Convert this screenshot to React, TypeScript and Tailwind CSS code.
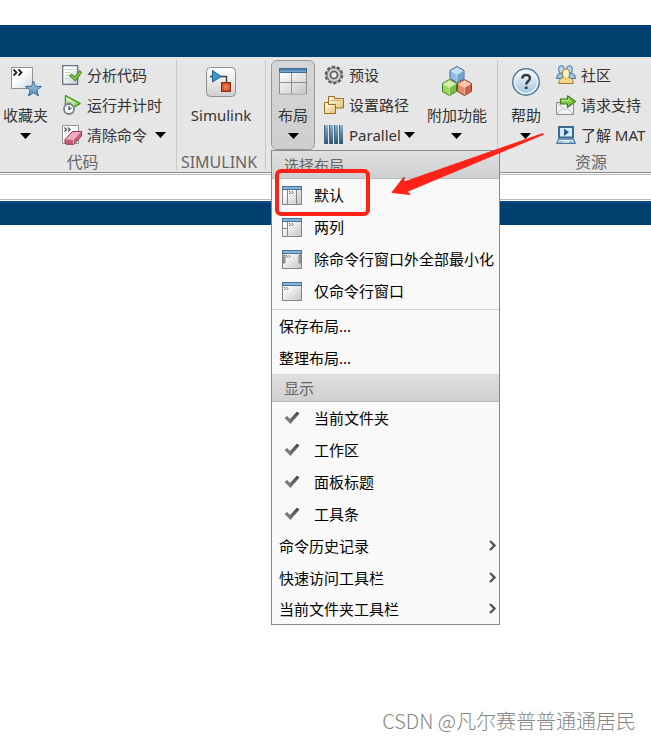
import type { ReactNode } from 'react';

function AnalyzeIcon() {
  return (
    <svg width="20" height="20" viewBox="0 0 20 20" aria-hidden="true">
      <defs>
        <linearGradient id="an-page" x1="0" y1="0" x2="1" y2="1">
          <stop offset="0.3" stopColor="#fff" />
          <stop offset="1" stopColor="#bcc8d2" />
        </linearGradient>
      </defs>
      <path d="M0.7 0.7h15v18.600h-15z" fill="url(#an-page)" stroke="#657582" strokeWidth="1.300" />
      <path d="M3 4.500h8M3 7.500h5M3 10.500h4M3 13.500h5" stroke="#c3d2cf" />
      <path
        d="M7.500 11l2-2 3.500 3L17.500 5.500l2.200 1.700L13.500 16z"
        fill="#7fc243"
        stroke="#3e7d1d"
        strokeLinejoin="round"
      />
    </svg>
  );
}

function RunTimeIcon() {
  return (
    <svg width="20" height="20" viewBox="0 0 20 20" aria-hidden="true">
      <defs>
        <linearGradient id="run-tri" x1="0" y1="0" x2="1" y2="1">
          <stop offset="0" stopColor="#f2ffe6" />
          <stop offset="1" stopColor="#86cf58" />
        </linearGradient>
      </defs>
      <path d="M3.500 0.700L18 8.500L9 13.500H3.500z" fill="url(#run-tri)" stroke="#459c25" strokeWidth="1.500" strokeLinejoin="round" />
      <path d="M5 7.500h4V10H5z" fill="#79858e" />
      <circle cx="7" cy="14" r="5" fill="#f6f8fa" stroke="#77838c" strokeWidth="1.800" />
      <path d="M7 11v3.500l2.500-1.500" fill="none" stroke="#3f4b55" strokeWidth="1.200" />
    </svg>
  );
}

function ClearIcon() {
  return (
    <svg width="20" height="20" viewBox="0 0 20 20" aria-hidden="true">
      <path d="M0.500 0.500h16v18h-16z" fill="#fbfcfd" stroke="#8c969f" />
      <path d="M2.500 2.500l2 2-2 2M6 2.500l2 2-2 2" fill="none" stroke="#444" strokeWidth="1.200" />
      <path d="M3 14.500l7.500-8h9v4.500L12 19.300H4.500L3 18z" fill="#c4607b" stroke="#97384f" strokeLinejoin="round" />
      <path d="M3.500 14.500l7.300-7.500h8.200l-7.500 8z" fill="#f0aebc" />
      <path d="M11.500 15v4" stroke="#e9a1b2" />
    </svg>
  );
}

function FavoritesIcon() {
  return (
    <svg width="32" height="32" viewBox="0 0 32 32" aria-hidden="true">
      <defs>
        <linearGradient id="fav-page" x1="0" y1="0" x2="1" y2="1">
          <stop offset="0.4" stopColor="#fff" />
          <stop offset="1" stopColor="#d0d6da" />
        </linearGradient>
        <linearGradient id="fav-star" x1="0" y1="0" x2="0" y2="1">
          <stop offset="0" stopColor="#a9cfe9" />
          <stop offset="1" stopColor="#5188b4" />
        </linearGradient>
      </defs>
      <path d="M1.500 2.500h21v21h-21z" fill="url(#fav-page)" stroke="#88929a" />
      <path d="M3.500 4.500l3 3-3 3M8.500 4.500l3 3-3 3" fill="none" stroke="#222" strokeWidth="1.800" />
      <path
        d="M23.500 16l2 5.300 6 .2-4.600 3.700 1.600 5.800-5-3.300-5 3.300 1.600-5.800-4.600-3.700 6-.2z"
        fill="url(#fav-star)"
        stroke="#3b6f9c"
        strokeLinejoin="round"
      />
    </svg>
  );
}

function SimulinkIcon() {
  return (
    <svg width="32" height="32" viewBox="0 0 32 32" aria-hidden="true">
      <defs>
        <linearGradient id="sim-tile" x1="0" y1="0" x2="0" y2="1">
          <stop offset="0" stopColor="#fff" />
          <stop offset="1" stopColor="#d0d0d0" />
        </linearGradient>
        <radialGradient id="sim-box">
          <stop offset="0" stopColor="#f08a5a" />
          <stop offset="1" stopColor="#cf4a20" />
        </radialGradient>
      </defs>
      <rect x="1.500" y="2.500" width="29" height="29" rx="4" fill="url(#sim-tile)" stroke="#909090" />
      <path d="M5 11.500h4M14 11.500h7.500v6" fill="none" stroke="#3c3c3c" strokeWidth="1.400" />
      <path d="M7.500 5.500L16 11.500l-8.500 5.500z" fill="#3d9bd0" stroke="#1b5f91" strokeLinejoin="round" />
      <rect x="16.500" y="17.500" width="9" height="9" fill="url(#sim-box)" stroke="#7f2c14" />
    </svg>
  );
}

function LayoutIcon() {
  return (
    <svg width="30" height="32" viewBox="0 0 30 32" aria-hidden="true">
      <defs>
        <linearGradient id="lay-bar" x1="0" y1="0" x2="0" y2="1">
          <stop offset="0" stopColor="#356a9b" />
          <stop offset="1" stopColor="#8dbbe0" />
        </linearGradient>
        <linearGradient id="lay-pane" x1="0" y1="0" x2="1" y2="1">
          <stop offset="0" stopColor="#fff" />
          <stop offset="1" stopColor="#c8c8c8" />
        </linearGradient>
      </defs>
      <path d="M1 4h28v25H1z" fill="#fff" />
      <path d="M2 8h11v9H2zM14 8h14v9H14zM2 18h11v10H2zM14 18h14v10H14z" fill="url(#lay-pane)" />
      <path d="M1.500 7v22h27V7M1.500 17.500h27M13.500 8v21" fill="none" stroke="#8f8f8f" />
      <path d="M1 3h28v5H1z" fill="url(#lay-bar)" />
      <path d="M1.500 3.500h27v4h-27z" fill="none" stroke="#416d94" />
    </svg>
  );
}

function GearIcon() {
  return (
    <svg width="20" height="20" viewBox="0 0 20 20" aria-hidden="true">
      <circle cx="10" cy="10" r="8.200" fill="none" stroke="#5e5e5e" strokeWidth="2.200" strokeDasharray="3.440 1.712" />
      <circle cx="10" cy="10" r="7.200" fill="#bdbdbd" stroke="#666" />
      <circle cx="10" cy="10" r="5.400" fill="none" stroke="#dcdcdc" />
      <circle cx="10" cy="10" r="3.500" fill="#e9e9e9" stroke="#5a5a5a" strokeWidth="1.700" />
    </svg>
  );
}

function PathIcon() {
  return (
    <svg width="20" height="20" viewBox="0 0 20 20" aria-hidden="true">
      <defs>
        <linearGradient id="path-folder" x1="0" y1="0" x2="1" y2="1">
          <stop offset="0" stopColor="#fffdf0" />
          <stop offset="1" stopColor="#e3c171" />
        </linearGradient>
      </defs>
      <path d="M4.500 1.500h6v2h9v9.500h-15z" fill="url(#path-folder)" stroke="#9c6c1c" />
      <path d="M6.500 5.500h11" stroke="#d2ad60" />
      <path d="M0.500 7.500h4v2h7v9h-11z" fill="url(#path-folder)" stroke="#9c6c1c" />
      <path d="M2 11h8" stroke="#fffbe6" />
    </svg>
  );
}

function ParallelIcon() {
  return (
    <svg width="20" height="20" viewBox="0 0 20 20" aria-hidden="true">
      <defs>
        <linearGradient id="par-bar" x1="0" y1="0" x2="0" y2="1">
          <stop offset="0" stopColor="#8db3cd" />
          <stop offset="1" stopColor="#2f5877" />
        </linearGradient>
      </defs>
      {[0, 5, 10, 15].map((x) => (
        <g key={x}>
          <rect x={x} y="0" width="4" height="19" fill="url(#par-bar)" />
          <rect x={x} y="0" width="1" height="19" fill="#426b8a" />
        </g>
      ))}
    </svg>
  );
}

function AddOnsIcon() {
  const cubes = [
    { x: 8.5, y: 0, top: '#c3e0f4', left: '#8fbfe2', right: '#6fa5ce', line: '#35658f' },
    { x: 1, y: 13, top: '#d3f0a8', left: '#a0d763', right: '#7dbb40', line: '#47791f' },
    { x: 16, y: 13, top: '#f8c6b0', left: '#e68b6b', right: '#cd6145', line: '#8f3a25' },
  ];
  return (
    <svg width="32" height="32" viewBox="0 0 32 32" aria-hidden="true">
      {cubes.map((c) => (
        <g key={c.line} transform={`translate(${c.x} ${c.y + 1})`} strokeLinejoin="round">
          <path d="M7.500 0.500L14.500 4.500V12.500L7.500 16.500L0.500 12.500V4.500z" fill={c.left} stroke={c.line} />
          <path d="M7.500 8.500L14 5v7.200L7.500 16z" fill={c.right} />
          <path d="M7.500 1.200L13.600 4.700L7.500 8.200L1.400 4.700z" fill={c.top} />
          <path d="M1 4.800l6.500 3.700L14 4.800M7.500 8.500V16" fill="none" stroke="#fff" strokeOpacity="0.400" />
        </g>
      ))}
    </svg>
  );
}

function HelpIcon() {
  return (
    <svg width="32" height="32" viewBox="0 0 32 32" aria-hidden="true">
      <defs>
        <linearGradient id="help-disc" x1="0" y1="0" x2="0" y2="1">
          <stop offset="0" stopColor="#fff" />
          <stop offset="1" stopColor="#9dc1db" />
        </linearGradient>
      </defs>
      <circle cx="16" cy="17" r="13.200" fill="url(#help-disc)" stroke="#547a98" strokeWidth="1.500" />
      <circle cx="16" cy="17" r="11.500" fill="none" stroke="#e8f3fa" strokeWidth="1.500" />
      <path
        d="M12.300 13.600c.1-2.400 1.600-3.600 3.800-3.600s3.800 1.300 3.800 3.300c0 3-3.700 2.900-3.700 6.200"
        fill="none"
        stroke="#333d47"
        strokeWidth="2.500"
      />
      <path d="M14.900 21.400h2.700v2.700h-2.700z" fill="#333d47" />
    </svg>
  );
}

function CommunityIcon() {
  return (
    <svg width="20" height="20" viewBox="0 0 20 20" aria-hidden="true">
      <path d="M0.600 13.500c0-3.500 1.500-5 4-5s4 1.500 4 5z" fill="#9cc5e4" stroke="#44759e" />
      <ellipse cx="5.500" cy="4.500" rx="2.900" ry="3.900" fill="#b7d8ef" stroke="#44759e" />
      <path d="M11.400 13.500c0-3.500 1.500-5 4-5s4 1.500 4 5z" fill="#9cc5e4" stroke="#44759e" />
      <ellipse cx="13.500" cy="4.500" rx="2.900" ry="3.900" fill="#b7d8ef" stroke="#44759e" />
      <path d="M2.800 18.500c0-4.500 3-6.500 7.200-6.500s7.200 2 7.200 6.500z" fill="#f3d78a" stroke="#a1761f" />
      <ellipse cx="10" cy="8.500" rx="3.500" ry="4.500" fill="#fdf0c4" stroke="#a1761f" />
      <path d="M7.700 12.500h4.600" stroke="#f6dd98" strokeWidth="1.600" />
    </svg>
  );
}

function SupportIcon() {
  return (
    <svg width="20" height="20" viewBox="0 0 20 20" aria-hidden="true">
      <path d="M0.500 7.500h17v12h-17z" fill="#f0f1f2" stroke="#868f95" />
      <path d="M1 19l6-6M17 19l-6-6M1 8l8 7 8-7" fill="none" stroke="#bcc3c8" />
      <path
        d="M4.500 4h7V0.800L19.500 6.500l-8 5.800V9h-7z"
        fill="#82c943"
        stroke="#3d7c1d"
        strokeWidth="1.200"
        strokeLinejoin="round"
      />
      <path d="M5.500 5.500h7V3.500" fill="none" stroke="#c9f09e" />
    </svg>
  );
}

function LearnIcon() {
  return (
    <svg width="20" height="20" viewBox="0 0 20 20" aria-hidden="true">
      <path d="M3 2h14v10.500H3z" fill="#d8eaf6" stroke="#396a94" strokeWidth="2" />
      <path d="M8 3.500l5 3.700L8 11z" fill="#275b88" />
      <path d="M2.500 14h15l2 4.500H0.500z" fill="#9dbcd3" stroke="#396a94" strokeWidth="0.900" />
      <path d="M3 15.500h14M7 17h6" stroke="#e7f2f9" />
    </svg>
  );
}

function WindowIcon({ children, prompt }: { children?: ReactNode; prompt: number }) {
  return (
    <svg className="shrink-0" width="20" height="19" viewBox="0 0 20 19" aria-hidden="true">
      <defs>
        <linearGradient id="win-body" x1="0" y1="0" x2="1" y2="1">
          <stop offset="0.200" stopColor="#fff" />
          <stop offset="1" stopColor="#c4c4c4" />
        </linearGradient>
      </defs>
      <path d="M0.500 1v17.500h19V1z" fill="url(#win-body)" stroke="#858585" />
      <path d="M0 0h20v4H0z" fill="#447297" />
      <path d="M1 1h18v2H1z" fill="#86b6da" />
      {children}
      <path
        d="M0 0l1.500 1.500L0 3M2.500 0L4 1.500L2.500 3"
        transform={`translate(${prompt} 5)`}
        fill="none"
        stroke="#555"
        strokeWidth="0.900"
      />
    </svg>
  );
}

const paneLine = { fill: 'none', stroke: '#858585' };

const layouts = [
  {
    name: '默认',
    icon: (
      <WindowIcon prompt={7}>
        <path d="M5.500 4v14.500M14.500 4v14.500" {...paneLine} />
      </WindowIcon>
    ),
  },
  {
    name: '两列',
    icon: (
      <WindowIcon prompt={7}>
        <path d="M5.500 4v14.500M0 10.500h5.500" {...paneLine} />
      </WindowIcon>
    ),
  },
  {
    name: '除命令行窗口外全部最小化',
    icon: (
      <WindowIcon prompt={4}>
        <path d="M1 5h2v8H1zM17 5h2v8h-2z" fill="#a9a9a9" stroke="#777" strokeWidth="0.800" />
      </WindowIcon>
    ),
  },
  { name: '仅命令行窗口', icon: <WindowIcon prompt={2} /> },
];

const panels = ['当前文件夹', '工作区', '面板标题', '工具条'];
const submenus = ['命令历史记录', '快速访问工具栏', '当前文件夹工具栏'];

function Caret() {
  return (
    <svg className="shrink-0" width="11" height="6" viewBox="0 0 11 6" aria-hidden="true">
      <path d="M0 0h11L5.500 6z" fill="#000" />
    </svg>
  );
}

function BigButton({ icon, label, caret = true }: { icon: ReactNode; label: string; caret?: boolean }) {
  return (
    <button type="button" className="flex h-[90px] flex-col items-center pt-[5px]">
      {icon}
      <span className="my-2 whitespace-nowrap leading-5">{label}</span>
      {caret && <Caret />}
    </button>
  );
}

function SmallButton({ icon, label, children }: { icon: ReactNode; label: string; children?: ReactNode }) {
  return (
    <button type="button" className="flex h-[30px] items-center">
      {icon}
      <span className="ml-[5px] whitespace-nowrap leading-5">{label}</span>
      {children}
    </button>
  );
}

function MenuHeader({ children }: { children: ReactNode }) {
  return (
    <h2 className="h-7 border-b border-[#bbb] bg-linear-to-b from-[#dfdfdf] to-[#d0d0d0] pl-3 leading-7 text-[#666]">
      {children}
    </h2>
  );
}

function LayoutMenu() {
  return (
    <div className="absolute top-full left-0 z-10 w-[229px] border border-[#888] bg-[#f9f9f9] text-black">
      <MenuHeader>选择布局</MenuHeader>
      <div className="border-b border-[#d0d0d0] pb-[2px]">
        {layouts.map((item) => (
          <button key={item.name} type="button" className="flex h-8 w-full items-center gap-3 pl-[10px] whitespace-nowrap">
            {item.icon}
            {item.name}
          </button>
        ))}
      </div>
      <button type="button" className="flex h-8 w-full items-center pl-[7px]">保存布局...</button>
      <button type="button" className="flex h-8 w-full items-center pl-[7px]">整理布局...</button>
      <MenuHeader>显示</MenuHeader>
      {panels.map((name) => (
        <label key={name} className="relative flex h-8 items-center gap-3 pl-[10px]">
          <input type="checkbox" defaultChecked className="peer sr-only" />
          <svg className="invisible shrink-0 peer-checked:visible" width="20" height="16" viewBox="0 0 20 16" aria-hidden="true">
            <defs>
              <linearGradient id="tick" x1="0" y1="1" x2="1" y2="0">
                <stop offset="0" stopColor="#8a8a8a" />
                <stop offset="1" stopColor="#484848" />
              </linearGradient>
            </defs>
            <path d="M2.500 8l2.500-2 3 3L15 1.500l2.500 2L8.500 14z" fill="url(#tick)" />
          </svg>
          {name}
        </label>
      ))}
      {submenus.map((name) => (
        <button key={name} type="button" className="flex h-8 w-full items-center justify-between pr-[2px] pl-[7px] last:h-[30px]">
          {name}
          <svg width="8" height="12" viewBox="0 0 8 12" aria-hidden="true">
            <path d="M1 1l4.500 4.500L1 10" fill="none" stroke="#555" strokeWidth="2.400" />
          </svg>
        </button>
      ))}
    </div>
  );
}

// red frame and arrow drawn over the open menu
function Callout() {
  return (
    <>
      <div className="pointer-events-none absolute top-[109px] left-1 z-20 h-[47px] w-[95px] rounded-md border-4 border-[#ff2216]" />
      <svg
        className="pointer-events-none absolute top-[72px] left-[120px] z-20"
        width="154"
        height="66"
        viewBox="0 0 154 66"
        aria-hidden="true"
      >
        <path d="M152 1.500L13 50V45L1 60.500L19 62.500L16 59.500L152 2.500z" fill="#ff2216" stroke="#ff2216" strokeLinejoin="round" />
      </svg>
    </>
  );
}

export default function App() {
  return (
    <div className="flex min-h-screen flex-col overflow-hidden bg-white pt-[25px] font-['Noto_Sans','Noto_Sans_CJK_SC',sans-serif] text-[15px] text-[#333]">
      <div className="h-8 bg-[#004070]" />

      <div className="flex border-b border-[#888] bg-[#e6e6e6] pt-[3px]">
        <section className="mb-[2px] border-r border-[#c8c8c8] pr-[10px] pl-[3px]">
          <div className="flex gap-[14px]">
            <BigButton icon={<FavoritesIcon />} label="收藏夹" />
            <div className="flex flex-col items-start">
              <SmallButton icon={<AnalyzeIcon />} label="分析代码" />
              <SmallButton icon={<RunTimeIcon />} label="运行并计时" />
              <SmallButton icon={<ClearIcon />} label="清除命令">
                <span className="ml-2"><Caret /></span>
              </SmallButton>
            </div>
          </div>
          <h2 className="h-5 pr-1 text-center text-base leading-6 text-[#666]">代码</h2>
        </section>

        <section className="mb-[2px] flex w-[89px] shrink-0 flex-col items-center border-r border-[#c8c8c8]">
          <BigButton icon={<SimulinkIcon />} label="Simulink" caret={false} />
          <h2 className="h-5 pr-1 text-base leading-6 text-[#666]">SIMULINK</h2>
        </section>

        <section className="mb-[2px] flex shrink-0 items-start border-r border-[#c8c8c8] pr-[10px] pl-[5px]">
          <div className="relative">
            <button
              type="button"
              aria-expanded="true"
              className="flex h-[90px] w-11 flex-col items-center rounded-md border border-[#999] bg-linear-to-b from-[#d6d6d6] to-[#cecece] pt-1"
            >
              <LayoutIcon />
              <span className="my-2 leading-5">布局</span>
              <Caret />
            </button>
            <LayoutMenu />
            <Callout />
          </div>
          <div className="ml-[9px] flex flex-col items-start">
            <SmallButton icon={<GearIcon />} label="预设" />
            <SmallButton icon={<PathIcon />} label="设置路径" />
            <SmallButton icon={<ParallelIcon />} label="Parallel">
              <span className="ml-[3px]"><Caret /></span>
            </SmallButton>
          </div>
          <div className="ml-3">
            <BigButton icon={<AddOnsIcon />} label="附加功能" />
          </div>
        </section>

        <section className="min-w-0 flex-1 pl-3">
          <div className="flex gap-[14px]">
            <BigButton icon={<HelpIcon />} label="帮助" />
            <div className="flex flex-col items-start">
              <SmallButton icon={<CommunityIcon />} label="社区" />
              <SmallButton icon={<SupportIcon />} label="请求支持" />
              <SmallButton icon={<LearnIcon />} label="了解 MAT" />
            </div>
          </div>
          <h2 className="h-5 pl-[65px] text-base leading-6 text-[#666]">资源</h2>
        </section>
      </div>

      <div className="mt-px h-[26px] border-y border-[#bbb]" />
      <div className="mt-px h-6 border-t-2 border-[#104a84] bg-[#004070]" />

      <footer className="mt-auto pr-[15px] pb-[6px] text-right font-['Noto_Sans_CJK_SC',sans-serif] text-xl font-light text-[#858585]">
        CSDN @凡尔赛普普通通居民
      </footer>
    </div>
  );
}
